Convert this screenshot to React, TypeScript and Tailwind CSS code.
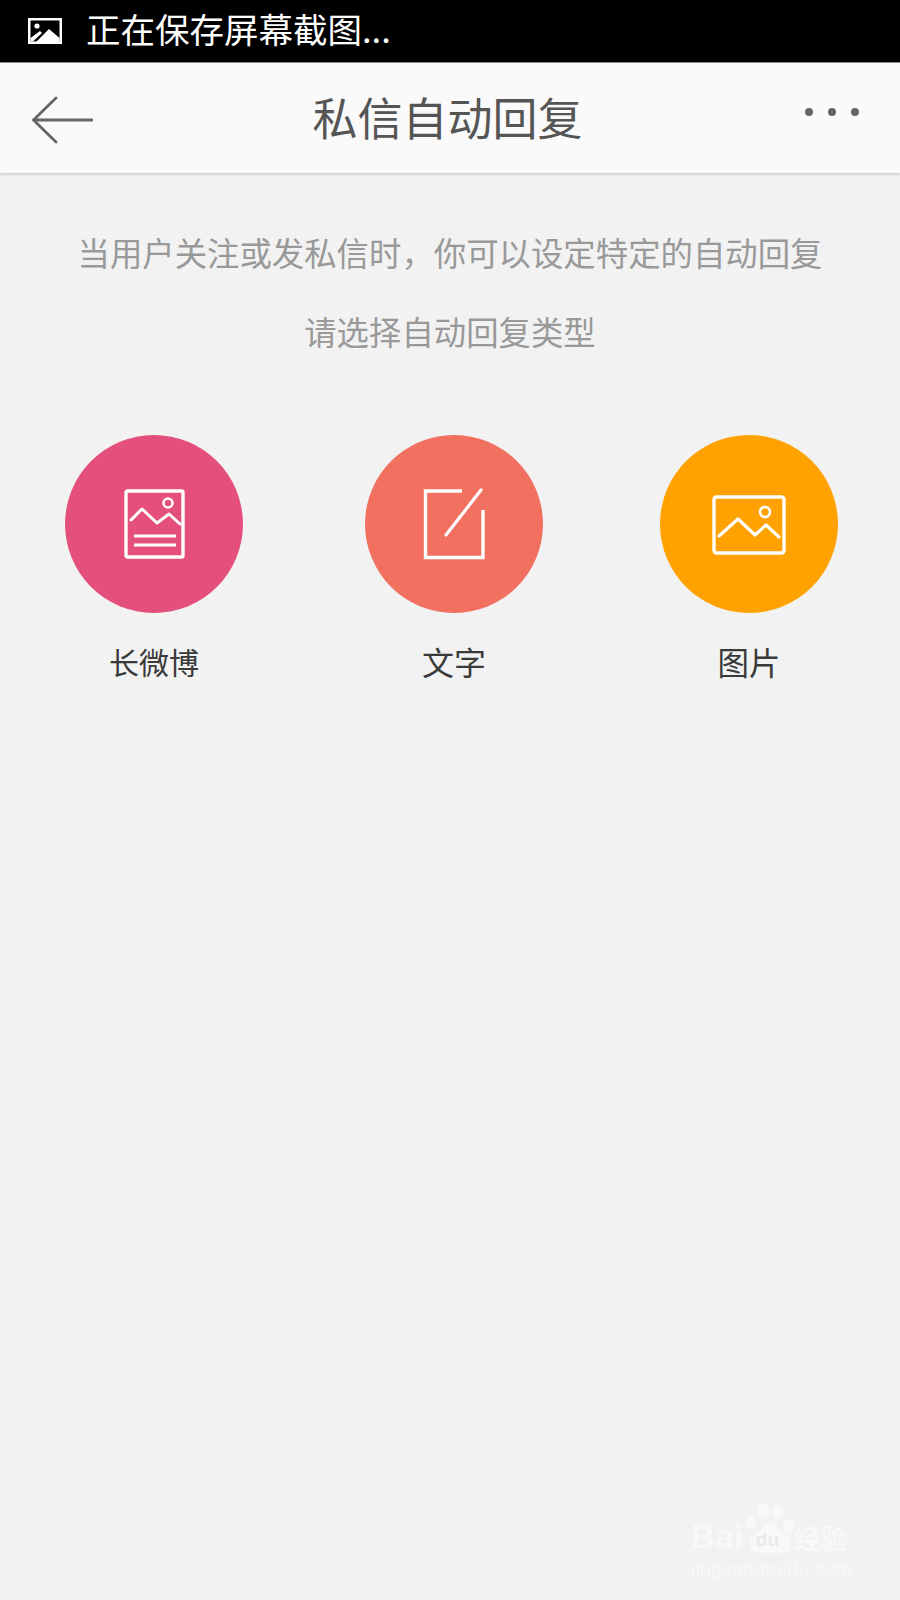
const cjk = { fontFamily: '"Noto Sans CJK SC", "Noto Sans", sans-serif' };

function Cell({ color, label, pl, w, divider, labelSize, children }: { color: string; label: string; pl: string; w: string; divider: boolean; labelSize: string; children: React.ReactNode }) {
  return (
    <div className={`${w} ${pl} h-[247px] pt-[51px] shrink-0 ${divider ? "border-r border-[#eeeeee]" : ""}`}>
      <div className={`${color} w-[178px] h-[178px] rounded-full flex items-center justify-center`}>{children}</div>
      <div className={`w-[178px] mt-[26px] h-[44px] leading-[44px] text-center ${labelSize} text-[#3a3a3a]`}>{label}</div>
    </div>
  );
}

export default function App() {
  return (
    <div className="w-[900px] h-[1600px] bg-[#f2f2f2] flex flex-col overflow-hidden relative" style={cjk}>
      <div className="h-[62px] bg-black flex items-center pl-[28px] shrink-0">
        <svg width="34" height="26" viewBox="0 0 34 26" className="shrink-0">
          <rect x="0" y="0" width="34" height="26" fill="#fff" />
          <rect x="2.500" y="2.500" width="29" height="21" fill="#000" />
          <path d="M6 26 L21 11 L31.500 20 L31.500 26Z" fill="#fff" />
          <path d="M2.500 20 L12 13 L14 15 L5 23.500 L2.500 23.500Z" fill="#fff" />
          <circle cx="9" cy="8" r="2.600" fill="#fff" />
        </svg>
        <span className="ml-[24px] mt-[-6px] text-[34.5px] text-white leading-none whitespace-nowrap">正在保存屏幕截图...</span>
      </div>
      <div className="h-[111px] shrink-0 bg-[#fafafa] border-t border-[#888888] shadow-[0_1px_3px_rgba(0,0,0,0.22)] flex items-center justify-between pl-[31px] pr-[41px]">
        <svg width="62" height="48" viewBox="0 0 62 48" className="shrink-0 mt-[3px]">
          <path d="M25 2 L2.500 24 L25 46 M2.500 24 L61 24" fill="none" stroke="#666" strokeWidth="2.800" strokeLinecap="round" strokeLinejoin="round" />
        </svg>
        <div className="text-[45px] leading-none text-[#555555] ml-[-3px] mt-[-3px] whitespace-nowrap">私信自动回复</div>
        <div className="flex gap-[15px] mt-[-12px]">
          <span className="w-[8px] h-[8px] rounded-full bg-[#666]" />
          <span className="w-[8px] h-[8px] rounded-full bg-[#666]" />
          <span className="w-[8px] h-[8px] rounded-full bg-[#666]" />
        </div>
      </div>
      <div className="text-center text-[32.4px] text-[#999999] leading-[46px] mt-[56px] whitespace-nowrap">当用户关注或发私信时，你可以设定特定的自动回复</div>
      <div className="text-center text-[32.4px] text-[#999999] leading-[46px] mt-[33px] whitespace-nowrap">请选择自动回复类型</div>
      <div className="flex mt-[30px]">
        <Cell color="bg-[#e4507b]" label="长微博" w="w-[299px]" pl="pl-[65px]" labelSize="text-[30px]" divider>
          <svg width="61" height="70" viewBox="0 0 61 70" fill="none" stroke="#fff" strokeWidth="3.400">
            <rect x="2" y="2" width="57" height="66" rx="1.500" />
            <path d="M7 31 L18 20 L33 34 L45 25 L56 35" strokeLinecap="round" strokeLinejoin="round" strokeWidth="3" />
            <circle cx="44" cy="14" r="4.500" strokeWidth="2.600" />
            <path d="M10 47 H52 M10 56 H52" strokeWidth="2.800" />
          </svg>
        </Cell>
        <Cell color="bg-[#f2705f]" label="文字" w="w-[300px]" pl="pl-[66px]" labelSize="text-[32px]" divider>
          <svg width="62" height="72" viewBox="0 0 62 72" fill="none" stroke="#fff" strokeWidth="3.400" strokeLinecap="round">
            <path d="M39 3 H2.500 V69.500 H60 V22" strokeLinecap="butt" />
            <path d="M58 2 L23 47" strokeWidth="3.200" />
          </svg>
        </Cell>
        <Cell color="bg-[#ffa200]" label="图片" w="w-[300px]" pl="pl-[61px]" labelSize="text-[31.5px]" divider={false}>
          <svg width="74" height="60" viewBox="0 0 74 60" fill="none" stroke="#fff" strokeWidth="3.400" className="mt-[1px]">
            <rect x="2" y="2" width="70" height="56" rx="2.500" />
            <path d="M7 41 L26 24 L43 40 L54 30 L67 42" strokeLinecap="round" strokeLinejoin="round" strokeWidth="3.200" />
            <circle cx="53" cy="17" r="5" strokeWidth="2.600" />
          </svg>
        </Cell>
      </div>
      <div className="absolute left-[691px] top-[1503px] w-[162px] text-[#fafafa] opacity-80">
        <div className="flex items-end h-[50px]" style={{ fontFamily: '"Liberation Sans", sans-serif' }}>
          <span className="text-[33px] font-bold leading-[32px] tracking-[0.5px]">Bai</span>
          <div className="relative w-[48px] h-[50px] shrink-0 ml-[2px]">
            <svg width="48" height="50" viewBox="0 0 48 50" fill="#fafafa">
              <ellipse cx="5.500" cy="19" rx="5.500" ry="7" />
              <ellipse cx="17" cy="8" rx="6" ry="8" />
              <ellipse cx="32" cy="9" rx="6" ry="8" />
              <ellipse cx="42.500" cy="23" rx="5.500" ry="7" />
              <path d="M24 20 C17 20 16 28 8 32 C0 37 3 50 13 50 C20 50 28 50 36 50 C46 50 48 38 41 33 C33 28 32 20 24 20Z" />
            </svg>
            <span className="absolute left-[10px] top-[27px] text-[19px] font-bold leading-[19px] text-[#e8e8e8]">du</span>
          </div>
          <span className="text-[27px] leading-[30px] font-bold whitespace-nowrap" style={cjk}>经验</span>
        </div>
        <div className="text-[20px] leading-[20px] mt-[6px] whitespace-nowrap" style={{ fontFamily: '"Liberation Sans", sans-serif' }}>jingyan.baidu.com</div>
      </div>
    </div>
  );
}
